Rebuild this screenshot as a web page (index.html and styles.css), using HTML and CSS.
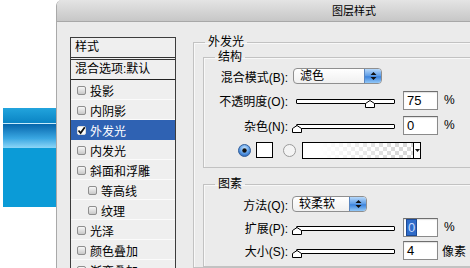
FILE: index.html
```html
<!DOCTYPE html>
<html lang="zh-CN">
<head>
  <meta charset="UTF-8">
  <link rel="stylesheet" href="styles.css">
  <title>图层样式</title>
</head>
<body>
  <div class="stage">
    <div class="pic">
      <div class="pic-blue">
        <div class="pic-top"></div>
        <div class="pic-glow"></div>
      </div>
    </div>

    <div class="dialog">
      <div class="titlebar">图层样式</div>
      <div class="dialog-body">
        <div class="style-list">
          <div class="list-head">样式</div>
          <div class="list-blend">混合选项:默认</div>
          <div class="list-item"><span class="chk"></span>投影</div>
          <div class="list-item"><span class="chk"></span>内阴影</div>
          <div class="list-item selected">
            <span class="chk on">
              <svg width="9" height="9" viewBox="0 0 9 9"><path d="M1.5 4.5 L3.6 7 L7.8 1.2" fill="none" stroke="#111" stroke-width="1.8"/></svg>
            </span>外发光
          </div>
          <div class="list-item"><span class="chk"></span>内发光</div>
          <div class="list-item"><span class="chk"></span>斜面和浮雕</div>
          <div class="list-item sub"><span class="chk"></span>等高线</div>
          <div class="list-item sub"><span class="chk"></span>纹理</div>
          <div class="list-item"><span class="chk"></span>光泽</div>
          <div class="list-item"><span class="chk"></span>颜色叠加</div>
          <div class="list-item"><span class="chk"></span>渐变叠加</div>
        </div>

        <div class="panel">
          <fieldset class="group outer">
            <legend>外发光</legend>

            <fieldset class="group inner">
              <legend>结构</legend>
              <div class="row h22">
                <span class="lbl">混合模式(B):</span>
                <div class="popup blend-pop">
                  <span class="popup-text">滤色</span>
                  <span class="stepper">
                    <svg width="7" height="10" viewBox="0 0 7 10"><path d="M0.5 4 L3.5 1 L6.5 4 Z M0.5 6 L3.5 9 L6.5 6 Z" fill="#111"/></svg>
                  </span>
                </div>
              </div>
              <div class="row h26">
                <span class="lbl">不透明度(O):</span>
                <div class="slider">
                  <svg class="thumb" style="left: 75%" width="10" height="8" viewBox="0 0 10 8"><path d="M0.5 3.5 L5 0.5 L9.5 3.5 L9.5 7.5 L0.5 7.5 Z" fill="#fff" stroke="#000"/></svg>
                </div>
                <span class="num">75</span>
                <span class="unit">%</span>
              </div>
              <div class="row h24">
                <span class="lbl">杂色(N):</span>
                <div class="slider">
                  <svg class="thumb" style="left: 0%" width="10" height="8" viewBox="0 0 10 8"><path d="M0.5 3.5 L5 0.5 L9.5 3.5 L9.5 7.5 L0.5 7.5 Z" fill="#fff" stroke="#000"/></svg>
                </div>
                <span class="num">0</span>
                <span class="unit">%</span>
              </div>
              <div class="row h26 colors">
                <svg class="radio" width="13" height="13" viewBox="0 0 13 13">
                  <defs>
                    <radialGradient id="aqua" cx="50%" cy="35%" r="65%">
                      <stop offset="0" stop-color="#d4ecff"/>
                      <stop offset="0.6" stop-color="#5c9ee8"/>
                      <stop offset="1" stop-color="#2a62b6"/>
                    </radialGradient>
                  </defs>
                  <circle cx="6.5" cy="6.5" r="6" fill="url(#aqua)" stroke="#36609a"/>
                  <circle cx="6.5" cy="6.5" r="2.2" fill="#111"/>
                </svg>
                <span class="swatch"></span>
                <svg class="radio radio-off" width="13" height="13" viewBox="0 0 13 13">
                  <circle cx="6.5" cy="6.5" r="6" fill="#f4f4f4" stroke="#9a9a9a"/>
                </svg>
                <div class="grad-pick">
                  <span class="grad-bar"></span>
                  <span class="grad-arrow">
                    <svg width="5" height="3" viewBox="0 0 5 3"><path d="M0 0 L5 0 L2.5 3 Z" fill="#111"/></svg>
                  </span>
                </div>
              </div>
            </fieldset>

            <fieldset class="group inner elements">
              <legend>图素</legend>
              <div class="row h24">
                <span class="lbl">方法(Q):</span>
                <div class="popup method-pop">
                  <span class="popup-text">较柔软</span>
                  <span class="stepper">
                    <svg width="7" height="10" viewBox="0 0 7 10"><path d="M0.5 4 L3.5 1 L6.5 4 Z M0.5 6 L3.5 9 L6.5 6 Z" fill="#111"/></svg>
                  </span>
                </div>
              </div>
              <div class="row h22">
                <span class="lbl">扩展(P):</span>
                <div class="slider">
                  <svg class="thumb" style="left: 0%" width="10" height="8" viewBox="0 0 10 8"><path d="M0.5 3.5 L5 0.5 L9.5 3.5 L9.5 7.5 L0.5 7.5 Z" fill="#fff" stroke="#000"/></svg>
                </div>
                <span class="num"><span class="sel">0</span></span>
                <span class="unit">%</span>
              </div>
              <div class="row h24">
                <span class="lbl">大小(S):</span>
                <div class="slider">
                  <svg class="thumb" style="left: 0%" width="10" height="8" viewBox="0 0 10 8"><path d="M0.5 3.5 L5 0.5 L9.5 3.5 L9.5 7.5 L0.5 7.5 Z" fill="#fff" stroke="#000"/></svg>
                </div>
                <span class="num">4</span>
                <span class="unit px">像素</span>
              </div>
            </fieldset>
          </fieldset>
        </div>
      </div>
    </div>
  </div>
</body>
</html>
```

FILE: styles.css
```css
* {
  box-sizing: border-box;
}
body {
  margin: 0;
  background: #ffffff;
  font-family: "Liberation Sans", "Noto Sans CJK SC", sans-serif;
  font-size: 12px;
  color: #000000;
}
.stage {
  display: flex;
  width: 470px;
  height: 268px;
  overflow: hidden;
}

/* picture on the canvas behind the dialog */
.pic {
  flex: none;
  width: 56px;
  padding: 108px 0 0 3px;
}
.pic-blue {
  width: 53px;
  height: 99px;
  background: #0b9bd7;
}
.pic-top {
  height: 16px;
  background: linear-gradient(#22a4dd, #0a84c4);
  border-bottom: 1px solid #c6ebfb;
}
.pic-glow {
  height: 24px;
  background: linear-gradient(#0565ab, #3aa7e2 60%, #8dd6f7);
}

/* dialog window */
.dialog {
  flex: none;
  width: 480px;
  background: #ebebeb;
  border-left: 1px solid #a9a9a9;
  border-top-left-radius: 6px;
}
.titlebar {
  height: 22px;
  padding: 3px 0 0 275px;
  line-height: 17px;
  font-size: 11px;
  background: linear-gradient(#e4e4e4, #c7c7c7);
  border-bottom: 1px solid #a8a8a8;
  border-top-left-radius: 5px;
}
.dialog-body {
  display: flex;
  align-items: flex-start;
  padding: 12px 0 0 13px;
}

/* style list on the left */
.style-list {
  flex: none;
  width: 106px;
  margin-top: 3px;
  border: 1px solid #3c3c3c;
  border-bottom: 0;
  background: #efefef;
}
.list-head {
  height: 22px;
  padding-left: 4px;
  line-height: 19px;
  border-bottom: 3px double #333333;
}
.list-blend {
  height: 20px;
  padding-left: 4px;
  line-height: 19px;
  border-bottom: 1px solid #222222;
}
.list-item {
  display: flex;
  align-items: center;
  height: 20px;
  padding-left: 6px;
  box-shadow: inset 0 -1px 0 #fbfbfb;
}
.list-item.sub {
  padding-left: 17px;
}
.list-item.selected {
  background: #2f62b3;
  color: #ffffff;
  box-shadow: none;
}
.chk {
  flex: none;
  width: 9px;
  height: 9px;
  margin-right: 4px;
  border: 1px solid #8e8e8e;
  border-radius: 2px;
  background: linear-gradient(#f6f6f6, #c9c9c9);
}
.chk.on {
  position: relative;
  border-color: #dddddd;
  background: #ffffff;
}
.chk.on svg {
  position: absolute;
  left: -1px;
  top: -1px;
}

/* right panel with group boxes */
.panel {
  flex: none;
  width: 320px;
  margin-left: 17px;
}
.group {
  margin: 0;
  padding: 0;
  min-width: 0;
  border: 1px solid #c2c2c2;
  box-shadow: inset 1px 1px 0 #f8f8f8;
}
.group legend {
  margin-left: 11px;
  padding: 0 3px;
  line-height: 16px;
}
.outer {
  padding-left: 9px;
  border-right: 0;
}
.outer > legend {
  margin-left: 2px;
}
.inner {
  margin-top: -1px;
  padding-bottom: 4px;
  border-right: 0;
}
.inner.elements {
  margin-top: 8px;
}

.row {
  display: flex;
  align-items: center;
}
.h22 {
  height: 22px;
}
.h24 {
  height: 24px;
}
.h26 {
  height: 26px;
}
.lbl {
  flex: none;
  width: 84px;
  text-align: right;
  white-space: nowrap;
}

/* popup menus */
.popup {
  display: flex;
  flex: none;
  height: 16px;
  margin-left: 5px;
  border: 1px solid #8f8f8f;
  border-radius: 4px;
  background: linear-gradient(#ffffff, #f0f0f0);
  overflow: hidden;
}
.blend-pop {
  width: 89px;
}
.method-pop {
  width: 75px;
  margin-left: 4px;
}
.popup-text {
  flex: 1;
  padding-left: 6px;
  line-height: 14px;
}
.stepper {
  display: flex;
  align-items: center;
  justify-content: center;
  flex: none;
  width: 17px;
  border-left: 1px solid #5a86bf;
  background: linear-gradient(#b6d8fa, #5b9be6 50%, #3b83dd 55%, #93c8f7);
}

/* sliders */
.slider {
  position: relative;
  flex: none;
  width: 99px;
  height: 5px;
  margin: 3px 0 0 8px;
  border: 1px solid #000000;
  border-radius: 1px;
  background: #ffffff;
}
.thumb {
  position: absolute;
  top: 0;
  margin-left: -5px;
}

/* number fields */
.num {
  flex: none;
  width: 35px;
  height: 19px;
  margin-left: 8px;
  padding-left: 3px;
  border: 1px solid #8a8a8a;
  border-top-color: #6e6e6e;
  background: #ffffff;
  box-shadow: inset 0 1px 1px rgba(0, 0, 0, 0.12);
  font-size: 13px;
  line-height: 17px;
}
.sel {
  display: inline-block;
  padding: 0 1px;
  line-height: 15px;
  background: #2f6bc8;
  color: #c9dbff;
  outline: 1px solid #1c4a96;
}
.unit {
  margin-left: 6px;
  font-size: 12px;
}
.unit.px {
  margin-left: 4px;
}

/* colour row */
.colors {
  padding-left: 34px;
}
.radio {
  flex: none;
}
.swatch {
  flex: none;
  width: 17px;
  height: 16px;
  margin-left: 5px;
  border: 1px solid #000000;
  background: #ffffff;
}
.radio-off {
  margin-left: 10px;
}
.grad-pick {
  display: flex;
  flex: none;
  width: 119px;
  height: 17px;
  margin-left: 6px;
  border: 1px solid #000000;
  background: #ffffff;
}
.grad-bar {
  flex: 1;
  background:
    linear-gradient(to right, #ffffff 15%, rgba(255, 255, 255, 0) 85%),
    repeating-conic-gradient(#d9d9d9 0 25%, #ffffff 0 50%) 0 0 / 8px 8px;
}
.grad-arrow {
  display: flex;
  align-items: center;
  justify-content: center;
  flex: none;
  width: 7px;
  border-left: 1px solid #000000;
  background: #ffffff;
}
```
